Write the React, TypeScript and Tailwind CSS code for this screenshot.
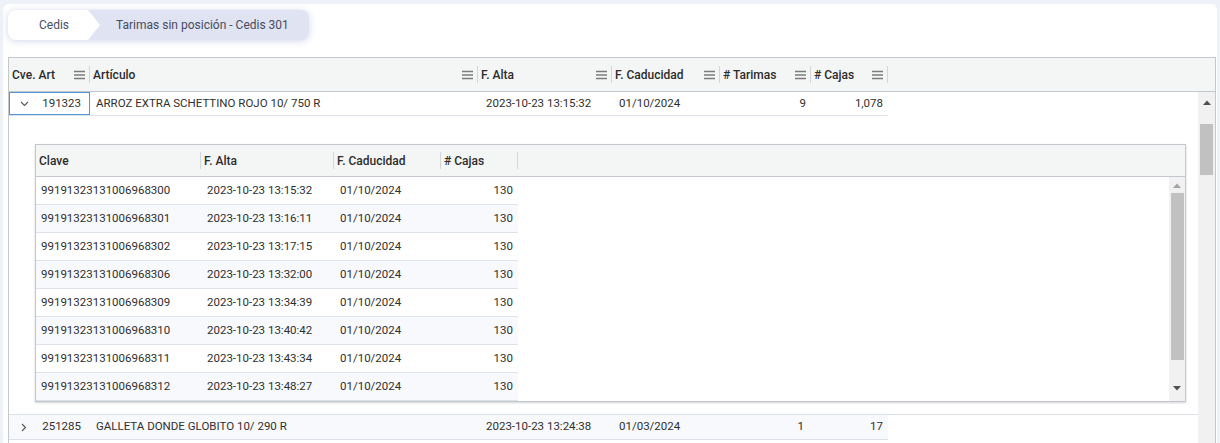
import React from "react";

const mainCols = [
  { label: "Cve. Art", w: "w-[81px]" },
  { label: "Artículo", w: "w-[388px]" },
  { label: "F. Alta", w: "w-[134px]" },
  { label: "F. Caducidad", w: "w-[108px]" },
  { label: "# Tarimas", w: "w-[91px]" },
  { label: "# Cajas", w: "w-[77px]" },
];

const subCols = [
  { label: "Clave", w: "w-[165px]" },
  { label: "F. Alta", w: "w-[133px]" },
  { label: "F. Caducidad", w: "w-[107px]" },
  { label: "# Cajas", w: "w-[77px]" },
];

const tarimas = [
  ["99191323131006968300", "2023-10-23 13:15:32"],
  ["99191323131006968301", "2023-10-23 13:16:11"],
  ["99191323131006968302", "2023-10-23 13:17:15"],
  ["99191323131006968306", "2023-10-23 13:32:00"],
  ["99191323131006968309", "2023-10-23 13:34:39"],
  ["99191323131006968310", "2023-10-23 13:40:42"],
  ["99191323131006968311", "2023-10-23 13:43:34"],
  ["99191323131006968312", "2023-10-23 13:48:27"],
];

function MenuIcon() {
  return (
    <svg width="11" height="10" viewBox="0 0 11 10" className="text-[#7b7b7b]">
      <path d="M0 1.5h11M0 5h11M0 8.5h11" stroke="currentColor" strokeWidth="1.5" />
    </svg>
  );
}

function Sep() {
  return <div className="w-px h-[17px] bg-[#d3d7dc]" />;
}

function ArrowUp({ light }: { light?: boolean }) {
  return (
    <svg width="8" height="5" viewBox="0 0 8 5">
      <path d="M0 5L4 0.5L8 5Z" fill={light ? "#a3a3a3" : "#505050"} />
    </svg>
  );
}

function ArrowDown() {
  return (
    <svg width="8" height="5" viewBox="0 0 8 5">
      <path d="M0 0L4 4.5L8 0Z" fill="#505050" />
    </svg>
  );
}

function Chevron({ open }: { open?: boolean }) {
  return open ? (
    <svg width="9" height="6" viewBox="0 0 9 6">
      <path d="M1 1l3.5 3.5L8 1" stroke="#555" strokeWidth="1.1" fill="none" />
    </svg>
  ) : (
    <svg width="6" height="9" viewBox="0 0 6 9">
      <path d="M1 1l3.5 3.5L1 8" stroke="#555" strokeWidth="1.1" fill="none" />
    </svg>
  );
}

function Breadcrumb() {
  return (
    <div className="inline-flex h-[30px] rounded-[8px] bg-[#dfe3f2] shadow-[0_1px_7px_rgba(90,110,190,0.28)] text-[12px]">
      <div className="flex items-center justify-center w-[92px] bg-white rounded-l-[8px] text-[#4a4f63] [clip-path:polygon(0_0,80px_0,92px_50%,80px_100%,0_100%)]">
        Cedis
      </div>
      <div className="flex items-center pl-[16px] pr-[20px] text-[#474c60]">
        Tarimas sin posición - Cedis 301
      </div>
    </div>
  );
}

function DetailGrid() {
  return (
    <div className="border border-[#c3c8ce] shadow-[0_1px_2px_rgba(0,0,0,0.18)]">
      <div className="flex h-[32px] bg-[#f4f5f5] border-b border-[#c3c8ce] text-[12px] font-medium text-[#2c2c2c]">
        {subCols.map((c) => (
          <div key={c.label} className={`${c.w} flex items-center h-full pl-[3px]`}>
            <span className="flex-1">{c.label}</span>
            <Sep />
          </div>
        ))}
      </div>
      <div className="flex h-[224px]">
        <div className="flex-1 overflow-hidden">
          {tarimas.map(([clave, alta], i) => (
            <div
              key={clave}
              className={`flex w-[482px] h-[28px] items-center border-b border-[#dde2ea] ${i % 2 === 1 ? "bg-[#f8f9fc]" : "bg-white"}`}
            >
              <div className="w-[165px] pl-[5px]">{clave}</div>
              <div className="w-[133px] pl-[6px]">{alta}</div>
              <div className="w-[107px] pl-[6px]">01/10/2024</div>
              <div className="w-[77px] pr-[5px] text-right">130</div>
            </div>
          ))}
        </div>
        <div className="w-[16px] bg-[#f1f1f1] flex flex-col items-center pt-[6px]">
          <ArrowUp light />
          <div className="w-[13px] h-[167px] bg-[#c1c1c1] mt-[5px]" />
          <div className="mt-[26px]">
            <ArrowDown />
          </div>
        </div>
      </div>
    </div>
  );
}

export default function App() {
  return (
    <div className="h-[443px] overflow-hidden bg-[#eef1f8] pt-[4px] px-[3px] font-[Roboto,sans-serif]">
      <div className="h-full bg-white rounded-t-[6px] pl-[5px] pr-[1px] pt-[6px]">
        <Breadcrumb />
        <div className="mt-[17px] border border-[#c3c8ce] h-[400px] flex flex-col">
          <div className="flex h-[34px] shrink-0 bg-[#f4f5f5] border-b border-[#c3c8ce] text-[12px] font-medium text-[#2c2c2c]">
            {mainCols.map((c) => (
              <div key={c.label} className={`${c.w} flex items-center h-full pl-[3px]`}>
                <span className="flex-1">{c.label}</span>
                <MenuIcon />
                <div className="w-[4px]" />
                <Sep />
              </div>
            ))}
          </div>
          <div className="flex flex-1 text-[11.5px] text-[#2f2f2f]">
            <div className="flex-1">
              <div className="flex w-[879px] h-[24px] items-center border-b border-[#dde2ea]">
                <div className="w-[81px] h-full border border-[#5294d9] flex items-center pl-[10px] pr-[8px]">
                  <Chevron open />
                  <span className="ml-auto">191323</span>
                </div>
                <div className="w-[388px] pl-[6px]">ARROZ EXTRA SCHETTINO ROJO 10/ 750 R</div>
                <div className="w-[134px] pl-[8px]">2023-10-23 13:15:32</div>
                <div className="w-[108px] pl-[7px]">01/10/2024</div>
                <div className="w-[91px] pr-[5px] text-right">9</div>
                <div className="w-[77px] pr-[5px] text-right">1,078</div>
              </div>
              <div className="h-[299px] border-b border-[#dde2ea] pl-[26px] pr-[12px] pt-[28px]">
                <DetailGrid />
              </div>
              <div className="flex w-[879px] h-[25px] items-center border-b border-[#dde2ea] bg-[#f8f9fc]">
                <div className="w-[81px] flex items-center pl-[12px] pr-[9px]">
                  <Chevron />
                  <span className="ml-auto">251285</span>
                </div>
                <div className="w-[388px] pl-[6px]">GALLETA DONDE GLOBITO 10/ 290 R</div>
                <div className="w-[134px] pl-[8px]">2023-10-23 13:24:38</div>
                <div className="w-[108px] pl-[7px]">01/03/2024</div>
                <div className="w-[91px] pr-[7px] text-right">1</div>
                <div className="w-[77px] pr-[5px] text-right">17</div>
              </div>
            </div>
            <div className="w-[17px] bg-[#f1f1f1] flex flex-col items-center pt-[8px]">
              <ArrowUp />
              <div className="w-[13px] h-[51px] bg-[#c1c1c1] mt-[19px]" />
            </div>
          </div>
        </div>
      </div>
    </div>
  );
}
